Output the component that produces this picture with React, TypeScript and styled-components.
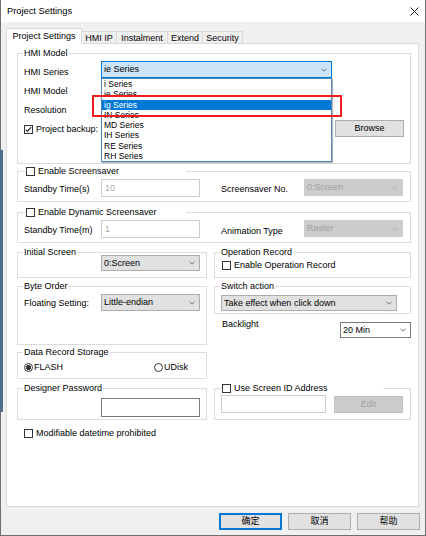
import React from "react";
import styled, { createGlobalStyle, css } from "styled-components";

const FONT = `"Liberation Sans", Arial, "Noto Sans CJK SC", sans-serif`;

const GlobalStyle = createGlobalStyle`
  html, body { margin: 0; padding: 0; background: #fff; }
  body { font-family: ${FONT}; font-size: 9px; color: #000; }
  * { box-sizing: border-box; }
`;

const Window = styled.div`
  position: relative;
  width: 426px;
  height: 536px;
  border: 1px solid #6f6f6f;
  border-top: none;
  background: #f0f0f0;
  display: flex;
  flex-direction: column;

  &::before {
    content: "";
    position: absolute;
    left: -1px;
    top: 150px;
    width: 3px;
    height: 262px;
    background: #4e6e8b;
  }
`;

const TitleBar = styled.div`
  height: 22px;
  flex: none;
  background: #fff;
  display: flex;
  align-items: center;
  justify-content: space-between;
  padding: 1px 6px 0 6px;
`;

const TitleText = styled.span`
  font-size: 9.3px;
  line-height: 11px;
`;

const Body = styled.div`
  flex: 1;
  display: flex;
  flex-direction: column;
  padding: 6px 5px 0 5px;
`;

const TabStrip = styled.div`
  display: flex;
  align-items: flex-end;
  height: 15px;
`;

const Tab = styled.div<{ $w: number; $active?: boolean }>`
  width: ${({ $w }) => $w}px;
  display: flex;
  align-items: center;
  justify-content: center;
  border: 1px solid #d9d9d9;
  border-bottom: none;
  line-height: 11px;
  white-space: nowrap;
  & + & {
    margin-left: -1px;
  }
  ${({ $active }) =>
    $active
      ? css`
          position: relative;
          z-index: 1;
          height: 16px;
          margin-bottom: -1px;
          background: #fff;
        `
      : css`
          height: 12px;
          background: #f0f0f0;
          padding-top: 1px;
        `}
`;

const Panel = styled.div`
  width: 413px;
  height: 464px;
  border: 1px solid #d9d9d9;
  background: #fff;
  padding: 9px 7px 0 10px;
  display: flex;
  flex-direction: column;
`;

const Footer = styled.div`
  display: flex;
  justify-content: flex-end;
  gap: 6px;
  margin-top: 6px;
`;

const Button = styled.button<{ $w: number; $h?: number; $kind?: "normal" | "focus" | "disabled"; $ml?: string }>`
  width: ${({ $w }) => $w}px;
  height: ${({ $h = 17 }) => $h}px;
  flex: none;
  padding: 0;
  margin: 0;
  margin-left: ${({ $ml = "0" }) => $ml};
  font-family: ${FONT};
  font-size: 9px;
  line-height: 11px;
  background: #e1e1e1;
  border: 1px solid #adadad;
  color: #000;
  ${({ $kind }) =>
    $kind === "focus" &&
    css`
      border: 2px solid #0078d7;
    `}
  ${({ $kind }) =>
    $kind === "disabled" &&
    css`
      background: #cccccc;
      border-color: #bfbfbf;
      color: #a0a0a0;
    `}
`;

const Group = styled.div<{ $h: number; $mt?: number; $pt?: number; $pl?: number; $pr?: number }>`
  position: relative;
  flex: none;
  height: ${({ $h }) => $h}px;
  margin-top: ${({ $mt = 0 }) => $mt}px;
  border: 1px solid #dcdcdc;
  padding: ${({ $pt = 0, $pr = 6, $pl = 6 }) => `${$pt}px ${$pr}px 0 ${$pl}px`};
`;

const Caption = styled.div<{ $left: number; $w?: number }>`
  position: absolute;
  top: -6px;
  left: ${({ $left }) => $left}px;
  ${({ $w }) => $w !== undefined && css`width: ${$w}px;`}
  height: 11px;
  line-height: 11px;
  padding: 0 1px;
  display: flex;
  align-items: center;
  gap: 3px;
  background: #fff;
  white-space: nowrap;
`;

const Row = styled.div<{ $h: number; $mt?: number; $ml?: number }>`
  display: flex;
  align-items: flex-start;
  height: ${({ $h }) => $h}px;
  margin-top: ${({ $mt = 0 }) => $mt}px;
  margin-left: ${({ $ml = 0 }) => $ml}px;
`;

const FormGrid = styled.div`
  display: grid;
  grid-template-columns: 77px 120px 83px 99px;
  align-items: start;
  height: 18px;
`;

const Label = styled.span<{ $w?: number; $mt?: number; $ml?: number }>`
  display: block;
  flex: none;
  ${({ $w }) => $w !== undefined && css`width: ${$w}px;`}
  margin-top: ${({ $mt = 0 }) => $mt}px;
  margin-left: ${({ $ml = 0 }) => $ml}px;
  line-height: 11px;
  white-space: nowrap;
`;

const CheckLine = styled.label<{ $mt?: number }>`
  display: flex;
  align-items: center;
  gap: 3px;
  height: 11px;
  line-height: 11px;
  margin-top: ${({ $mt = 0 }) => $mt}px;
  white-space: nowrap;
`;

const Box = styled.span`
  display: inline-flex;
  align-items: center;
  justify-content: center;
  flex: none;
  width: 9px;
  height: 9px;
  border: 1px solid #333;
  background: #fff;
`;

const Radio = styled.span<{ $on?: boolean }>`
  display: inline-block;
  flex: none;
  width: 9px;
  height: 9px;
  border: 1px solid #333;
  border-radius: 50%;
  background: ${({ $on }) =>
    $on ? "radial-gradient(circle, #333 0 2.2px, #fff 2.8px)" : "#fff"};
`;

const RadioRow = styled.div`
  display: grid;
  grid-template-columns: 130px auto;
  align-items: center;
  height: 11px;
`;

const RadioLine = styled.span`
  display: flex;
  align-items: center;
  gap: 1px;
  line-height: 11px;
`;

type ComboKind = "open" | "normal" | "disabled" | "white";

const comboColors: Record<ComboKind, { bg: string; border: string; color: string }> = {
  open: { bg: "#cce4f7", border: "#0078d7", color: "#000" },
  normal: { bg: "#e1e1e1", border: "#adadad", color: "#000" },
  disabled: { bg: "#cccccc", border: "#cccccc", color: "#a0a0a0" },
  white: { bg: "#fff", border: "#7a7a7a", color: "#000" },
};

const ComboBox = styled.div<{ $w: number; $h?: number; $kind: ComboKind; $ml?: number; $mt?: number }>`
  flex: none;
  width: ${({ $w }) => $w}px;
  height: ${({ $h = 17 }) => $h}px;
  margin-left: ${({ $ml = 0 }) => $ml}px;
  margin-top: ${({ $mt = 0 }) => $mt}px;
  display: flex;
  align-items: center;
  justify-content: space-between;
  padding: 0 4px 0 2px;
  line-height: 11px;
  white-space: nowrap;
  background: ${({ $kind }) => comboColors[$kind].bg};
  border: 1px solid ${({ $kind }) => comboColors[$kind].border};
  color: ${({ $kind }) => comboColors[$kind].color};
`;

const TextField = styled.div<{ $w: number; $h: number; $enabled?: boolean; $ml?: number }>`
  flex: none;
  width: ${({ $w }) => $w}px;
  height: ${({ $h }) => $h}px;
  margin-left: ${({ $ml = 0 }) => $ml}px;
  padding: 0 3px;
  display: flex;
  align-items: center;
  line-height: 11px;
  background: #fff;
  border: 1px solid ${({ $enabled }) => ($enabled ? "#7a7a7a" : "#cccccc")};
  color: #a8a8a8;
`;

const ComboWrap = styled.div`
  position: relative;
  flex: none;
`;

const DropList = styled.div`
  position: absolute;
  top: 17px;
  left: 0;
  width: 231px;
  border: 1px solid #4f86c0;
  background: #fff;
  box-shadow: 1px 1px 1px rgba(0, 0, 0, 0.28);
  z-index: 2;
`;

const DropItem = styled.div<{ $sel?: boolean }>`
  height: 10.3px;
  line-height: 10.3px;
  font-size: 8.5px;
  padding-left: 2px;
  white-space: nowrap;
  ${({ $sel }) =>
    $sel &&
    css`
      background: #0078d7;
      color: #fff;
    `}
`;

const RedMark = styled.div`
  position: absolute;
  left: -9px;
  top: 34px;
  width: 250px;
  height: 22px;
  border: 2px solid #f01c1c;
  pointer-events: none;
  z-index: 3;
`;

const Columns = styled.div`
  display: grid;
  grid-template-columns: 190px 197px;
  column-gap: 7px;
  align-items: start;
  margin-top: 9px;
`;

const Column = styled.div`
  display: flex;
  flex-direction: column;
`;

const Chevron = ({ color = "#606060" }: { color?: string }) => (
  <svg width="6" height="4" viewBox="0 0 6 4">
    <path d="M0.5 0.7 L3 3.2 L5.5 0.7" fill="none" stroke={color} strokeWidth="0.9" />
  </svg>
);

const Check = () => (
  <svg width="7" height="7" viewBox="0 0 7 7">
    <path d="M0.8 3.6 L2.6 5.4 L6.2 1.2" fill="none" stroke="#222" strokeWidth="1.1" />
  </svg>
);

const CheckBox = ({ checked }: { checked?: boolean }) => <Box>{checked && <Check />}</Box>;

const Combo = ({
  text,
  kind,
  w,
  h,
  ml,
  mt,
}: {
  text: string;
  kind: ComboKind;
  w: number;
  h?: number;
  ml?: number;
  mt?: number;
}) => (
  <ComboBox $w={w} $h={h} $kind={kind} $ml={ml} $mt={mt}>
    <span>{text}</span>
    <Chevron color={kind === "disabled" ? "#b0b0b0" : "#606060"} />
  </ComboBox>
);

const seriesList = [
  "i Series",
  "ie Series",
  "ig Series",
  "IN Series",
  "MD Series",
  "IH Series",
  "RE Series",
  "RH Series",
];

const tabs = [
  { name: "Project Settings", w: 76 },
  { name: "HMI IP", w: 36 },
  { name: "Instalment", w: 52 },
  { name: "Extend", w: 36 },
  { name: "Security", w: 41 },
];

export default function App() {
  return (
    <>
      <GlobalStyle />
      <Window>
        <TitleBar>
          <TitleText>Project Settings</TitleText>
          <svg width="9" height="9" viewBox="0 0 9 9">
            <path d="M0.5 0.5 L8.5 8.5 M8.5 0.5 L0.5 8.5" stroke="#222" strokeWidth="1" />
          </svg>
        </TitleBar>
        <Body>
          <TabStrip>
            {tabs.map((t, i) => (
              <Tab key={t.name} $w={t.w} $active={i === 0}>
                {t.name}
              </Tab>
            ))}
          </TabStrip>
          <Panel>
            <Group $h={111} $pt={7}>
              <Caption $left={5}>HMI Model</Caption>
              <Row $h={17}>
                <Label $w={77} $mt={5.5}>
                  HMI Series
                </Label>
                <ComboWrap>
                  <Combo text="ie Series" kind="open" w={231} />
                  <DropList>
                    {seriesList.map((s, i) => (
                      <DropItem key={s} $sel={i === 2}>
                        {s}
                      </DropItem>
                    ))}
                  </DropList>
                  <RedMark />
                </ComboWrap>
              </Row>
              <Row $h={19} $mt={2}>
                <Label $mt={5.6}>HMI Model</Label>
              </Row>
              <Row $h={19}>
                <Label $mt={5.6}>Resolution</Label>
              </Row>
              <Row $h={17} $mt={2}>
                <CheckLine $mt={3.5}>
                  <CheckBox checked />
                  Project backup:
                </CheckLine>
                <Button $w={69} $ml="auto">
                  Browse
                </Button>
              </Row>
            </Group>

            <Group $h={31} $mt={7} $pt={7}>
              <Caption $left={7} $w={161}>
                <CheckBox />
                Enable Screensaver
              </Caption>
              <FormGrid>
                <Label $mt={5}>Standby Time(s)</Label>
                <TextField $w={99} $h={18}>
                  10
                </TextField>
                <Label $mt={5}>Screensaver No.</Label>
                <Combo text="0:Screen" kind="disabled" w={99} />
              </FormGrid>
            </Group>

            <Group $h={31} $mt={10} $pt={7}>
              <Caption $left={7} $w={161}>
                <CheckBox />
                Enable Dynamic Screensaver
              </Caption>
              <FormGrid>
                <Label $mt={5}>Standby Time(m)</Label>
                <TextField $w={99} $h={18}>
                  1
                </TextField>
                <Label $mt={6}>Animation Type</Label>
                <Combo text="Raster" kind="disabled" w={99} />
              </FormGrid>
            </Group>

            <Columns>
              <Column>
                <Group $h={26} $pt={2}>
                  <Caption $left={5}>Initial Screen</Caption>
                  <Combo text="0:Screen" kind="normal" w={99} h={16} ml={77} />
                </Group>
                <Group $h={59} $mt={8} $pt={7}>
                  <Caption $left={5}>Byte Order</Caption>
                  <Row $h={17}>
                    <Label $w={77} $mt={4.3}>
                      Floating Setting:
                    </Label>
                    <Combo text="Little-endian" kind="normal" w={99} />
                  </Row>
                </Group>
                <Group $h={27} $mt={7} $pt={9} $pl={6}>
                  <Caption $left={5}>Data Record Storage</Caption>
                  <RadioRow>
                    <RadioLine>
                      <Radio $on />
                      FLASH
                    </RadioLine>
                    <RadioLine>
                      <Radio />
                      UDisk
                    </RadioLine>
                  </RadioRow>
                </Group>
                <Group $h={32} $mt={9} $pt={9}>
                  <Caption $left={5}>Designer Password</Caption>
                  <TextField $w={99} $h={19} $ml={77} $enabled />
                </Group>
              </Column>

              <Column>
                <Group $h={26} $pt={7} $pl={7}>
                  <Caption $left={5}>Operation Record</Caption>
                  <CheckLine>
                    <CheckBox />
                    Enable Operation Record
                  </CheckLine>
                </Group>
                <Group $h={28} $mt={8} $pt={8} $pl={6}>
                  <Caption $left={5}>Switch action</Caption>
                  <Combo text="Take effect when click down" kind="normal" w={176} h={16} />
                </Group>
                <Row $h={19} $mt={5}>
                  <Label $ml={8}>Backlight</Label>
                  <ComboWrap style={{ marginLeft: "auto" }}>
                    <Combo text="20 Min" kind="white" w={71} h={16} mt={3} />
                  </ComboWrap>
                </Row>
                <Group $h={32} $mt={50} $pt={6} $pl={6} $pr={7}>
                  <Caption $left={6} $w={162}>
                    <CheckBox />
                    Use Screen ID Address
                  </Caption>
                  <Row $h={18}>
                    <TextField $w={105} $h={18} />
                    <Button $w={69} $kind="disabled" $ml="auto" style={{ marginTop: 1 }}>
                      Edit
                    </Button>
                  </Row>
                </Group>
              </Column>
            </Columns>

            <Row $h={11} $mt={8} $ml={7}>
              <CheckLine>
                <CheckBox />
                Modifiable datetime prohibited
              </CheckLine>
            </Row>
          </Panel>
          <Footer>
            <Button $w={63} $kind="focus">
              确定
            </Button>
            <Button $w={63}>取消</Button>
            <Button $w={63}>帮助</Button>
          </Footer>
        </Body>
      </Window>
    </>
  );
}
